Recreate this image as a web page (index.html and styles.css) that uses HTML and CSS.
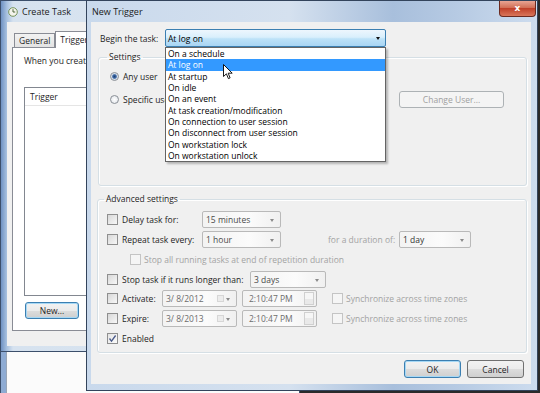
FILE: index.html
```html
<!DOCTYPE html>
<html>
	<head>
		<meta charset="utf-8"/>
		<title>New Trigger</title>
		<link rel="stylesheet" href="styles.css">
	</head>
	<body>
		<div class="desktop">
			<!-- window behind: Create Task -->
			<div class="win back">
				<div class="titlebar">
					<svg class="app-icon" width="10" height="10" viewBox="0 0 10 10">
						<circle cx="5" cy="5" r="4.3" fill="#f4f4ec" stroke="#6a8a4a" stroke-width="0.9"/>
						<path d="M5 2.2V5h2.2" fill="none" stroke="#3d5a2a" stroke-width="0.9"/>
					</svg>
					<span class="title">Create Task</span>
				</div>
				<div class="client">
					<div class="tabs">
						<div class="tab">General</div>
						<div class="tab active">Triggers</div>
						<div class="tab">Actions</div>
					</div>
					<div class="tab-panel">
						<p class="hint">When you create a task, you can specify the conditions that will trigger the task.</p>
						<div class="list">
							<div class="list-head">Trigger</div>
						</div>
						<div class="panel-buttons">
							<button class="btn default">New...</button>
						</div>
					</div>
				</div>
			</div>
			<div class="win under"><div class="under-client"></div></div>

			<!-- active window: New Trigger -->
			<div class="win front">
				<div class="titlebar">
					<span class="title">New Trigger</span>
					<span class="close">x</span>
				</div>
				<div class="client">
					<div class="begin-row">
						<label class="begin-label">Begin the task:</label>
						<div class="combo focus">At log on<span class="arrow dark"></span></div>
					</div>

					<fieldset class="group settings">
						<legend>Settings</legend>
						<div class="radio-row">
							<span class="radio checked"></span>Any user
						</div>
						<div class="radio-row">
							<span class="radio"></span>Specific user:
							<button class="btn disabled change-user">Change User...</button>
						</div>
					</fieldset>

					<fieldset class="group advanced">
						<legend>Advanced settings</legend>
						<div class="row">
							<span class="check"></span><span class="lbl w-delay">Delay task for:</span>
							<div class="combo ro w-small">15 minutes<span class="arrow"></span></div>
						</div>
						<div class="row">
							<span class="check"></span><span class="lbl w-delay">Repeat task every:</span>
							<div class="combo ro w-small">1 hour<span class="arrow"></span></div>
							<span class="lbl dim duration">for a duration of:</span>
							<div class="combo ro w-day">1 day<span class="arrow"></span></div>
						</div>
						<div class="row indent">
							<span class="check off"></span><span class="lbl dim">Stop all running tasks at end of repetition duration</span>
						</div>
						<div class="row">
							<span class="check"></span><span class="lbl w-stop">Stop task if it runs longer than:</span>
							<div class="combo ro w-stop-box">3 days<span class="arrow"></span></div>
						</div>
						<div class="row">
							<span class="check"></span><span class="lbl w-date">Activate:</span>
							<div class="field date">3/ 8/2012<span class="cal"></span><span class="arrow"></span></div>
							<div class="field time">2:10:47 PM<span class="spin"></span></div>
							<span class="check off sync"></span><span class="lbl dim">Synchronize across time zones</span>
						</div>
						<div class="row">
							<span class="check"></span><span class="lbl w-date">Expire:</span>
							<div class="field date">3/ 8/2013<span class="cal"></span><span class="arrow"></span></div>
							<div class="field time">2:10:47 PM<span class="spin"></span></div>
							<span class="check off sync"></span><span class="lbl dim">Synchronize across time zones</span>
						</div>
						<div class="row">
							<span class="check checked">
								<svg width="9" height="9" viewBox="0 0 9 9"><path d="M1.5 4.5l2 2.6L7.6 1.5" fill="none" stroke="#4a5a8a" stroke-width="1.3"/></svg>
							</span><span class="lbl">Enabled</span>
						</div>
					</fieldset>

					<div class="dialog-buttons">
						<button class="btn default">OK</button>
						<button class="btn">Cancel</button>
					</div>

					<ul class="dropdown">
						<li>On a schedule</li>
						<li class="selected">At log on</li>
						<li>At startup</li>
						<li>On idle</li>
						<li>On an event</li>
						<li>At task creation/modification</li>
						<li>On connection to user session</li>
						<li>On disconnect from user session</li>
						<li>On workstation lock</li>
						<li>On workstation unlock</li>
					</ul>

					<svg class="cursor" width="10" height="16" viewBox="0 0 10 16">
						<path d="M0.5 0.5V12.5L3.4 9.8L5.4 14.6L7.1 13.9L5.2 9.2H9.2Z" fill="#fff" stroke="#000" stroke-width="0.9" stroke-linejoin="round"/>
					</svg>
				</div>
			</div>
		</div>
	</body>
</html>
```

FILE: styles.css
```css
* {
	box-sizing: border-box;
}
body {
	margin: 0;
	background: #222;
	font-family: "Open Sans", "Noto Sans", sans-serif;
	font-size: 8.5px;
	color: #1e1e1e;
}
.desktop {
	position: relative;
	width: 540px;
	height: 393px;
	overflow: hidden;
	background: #2a2a2a;
}

/* windows */
.win {
	position: absolute;
	border: 1px solid #3c4f6b;
}
.titlebar {
	height: 21px;
	display: flex;
	align-items: center;
}
.title {
	font-size: 9px;
	color: #1a1a1a;
}
.client {
	background: #f0f0f0;
}

.back {
	left: 0;
	top: 0;
	width: 300px;
	height: 352px;
	padding: 0 0 5px 6px;
	background: linear-gradient(to right, #6f92c3, #a9c2e0 6px, #d6e2ef 12px, #d9e4f0);
}
.back .titlebar {
	padding-left: 1px;
}
.back .app-icon {
	margin-right: 4px;
}
.back .client {
	height: 324px;
	padding: 9px 0 0 5px;
}
.tabs {
	display: flex;
	align-items: flex-end;
	height: 16px;
	padding-left: 2px;
}
.tab {
	height: 14px;
	padding: 0 4px;
	line-height: 13px;
	border: 1px solid #898c95;
	border-bottom: 0;
	background: linear-gradient(#f2f2f2, #e3e3e3);
}
.tab.active {
	height: 17px;
	margin-bottom: -1px;
	padding-top: 1px;
	background: #fff;
	position: relative;
}
.tab-panel {
	height: 284px;
	background: #fff;
	border: 1px solid #898c95;
	padding: 7px 0 0 11px;
}
.hint {
	margin: 0;
	line-height: 12px;
	white-space: nowrap;
}
.list {
	margin-top: 20px;
	height: 209px;
	border: 1px solid #828790;
}
.list-head {
	height: 18px;
	line-height: 17px;
	padding-left: 5px;
	border-bottom: 1px solid #e5e5e5;
}
.panel-buttons {
	padding: 6px 0 0 1px;
}

.under {
	left: 0;
	top: 351px;
	width: 300px;
	height: 60px;
	padding-left: 5px;
	background: #8eabd3;
}
.under-client {
	height: 100%;
	border-left: 1px solid #9aa6b6;
	background: #fbfbfb;
}

.front {
	left: 86px;
	top: 0;
	width: 452px;
	height: 391px;
	padding: 0 6px 6px 4px;
	background: linear-gradient(to right, #c9d9ec, #d5e1ef 45%, #a8bfdc 68%, #b6cae3 82%, #cddcee);
	border-color: #33445c;
}
.front .titlebar {
	padding-left: 1px;
}
.close {
	margin-left: auto;
	margin-right: -5px;
	align-self: flex-start;
	width: 37px;
	height: 16px;
	border: 1px solid #6b2a20;
	border-top: 0;
	border-radius: 0 0 4px 4px;
	background: linear-gradient(#e8a493, #d16f56 45%, #c0412a 50%, #d9765a);
	color: #fff;
	font-family: "DejaVu Sans", sans-serif;
	font-weight: bold;
	font-size: 9px;
	line-height: 14px;
	text-align: center;
}
.front .client {
	position: relative;
	height: 362px;
	padding: 7px 4px 0 6px;
}

/* begin row */
.begin-row {
	display: flex;
	align-items: center;
	height: 18px;
}
.begin-label {
	width: 68px;
	padding-left: 3px;
}

/* combos and fields */
.combo, .field {
	position: relative;
	display: flex;
	align-items: center;
	height: 17px;
	padding-left: 3px;
	border: 1px solid #b9b9b9;
	border-radius: 2px;
	background: linear-gradient(to right, #f3f3f3, #fbfbfb 60%, #f0f0f0);
	color: #4a4a4a;
	white-space: nowrap;
}
.combo.focus {
	width: 221px;
	height: 18px;
	padding-left: 2px;
	border-color: #3c7fb1;
	background: linear-gradient(#edf6fd, #d9effc 45%, #bde2f8 55%, #a9d5f3);
	color: #000;
}
.arrow {
	position: absolute;
	right: 6px;
	top: 7px;
	border-left: 2.5px solid transparent;
	border-right: 2.5px solid transparent;
	border-top: 3px solid #8a8a8a;
}
.arrow.dark {
	border-top-color: #111;
	right: 5px;
}
.w-small {
	width: 79px;
}
.w-day {
	width: 72px;
	color: #333;
}
.w-stop-box {
	width: 76px;
}

/* group boxes */
.group {
	margin: 0;
	border: 1px solid #d5dfe5;
	border-radius: 3px;
	box-shadow: inset 1px 1px 0 #fff, 1px 1px 0 #fff;
}
.group legend {
	padding: 0 2px;
	margin-left: -3px;
	line-height: 12px;
}
.settings {
	margin-top: 4px;
	margin-left: 1px;
	width: 429px;
	height: 135px;
	padding: 5px 22px 0 11px;
}
.radio-row {
	display: flex;
	align-items: center;
	height: 16px;
}
.radio-row + .radio-row {
	margin-top: 5px;
	height: 20px;
}
.radio {
	width: 9px;
	height: 9px;
	margin-right: 4px;
	border: 1px solid #8a8f96;
	border-radius: 50%;
	background: radial-gradient(#fff, #dfe3e8);
}
.radio.checked {
	background: radial-gradient(circle, #1f3f72 0, #3d6aa8 1.8px, #cfd9e6 2.8px, #f4f6f9 4px);
}
.change-user {
	margin-left: auto;
	width: 105px;
	height: 19px;
}

.advanced {
	margin-top: 7px;
	width: 430px;
	height: 160px;
	padding: 5px 0 0 9px;
	display: grid;
	grid-auto-rows: 19.75px;
}
.row {
	display: flex;
	align-items: center;
	white-space: nowrap;
}
.row.indent {
	padding-left: 23px;
}
.check {
	flex: none;
	display: flex;
	align-items: center;
	justify-content: center;
	width: 11px;
	height: 11px;
	margin-right: 4px;
	border: 1px solid #8f8f8f;
	background: linear-gradient(135deg, #d8d8d8, #f7f7f7);
}
.check.off {
	border-color: #c4c4c4;
	background: #f5f5f5;
	margin-right: 3px;
}
.check.checked {
	background: linear-gradient(135deg, #e4e4e4, #fbfbfb);
}
.lbl {
	flex: none;
}
.dim {
	color: #a3a3a3;
}
.w-delay {
	width: 80px;
}
.w-stop {
	width: 128px;
}
.w-date {
	width: 40px;
}
.duration {
	margin-left: 47px;
	width: 71px;
}
.field {
	width: 75px;
	color: #6d6d6d;
}
.field.time {
	margin-left: 5px;
	padding-left: 6px;
}
.cal {
	position: absolute;
	right: 12px;
	top: 4px;
	width: 7px;
	height: 7px;
	border: 1px solid #d6d6d6;
	background: #ececec;
}
.spin {
	position: absolute;
	right: 2px;
	top: 1px;
	width: 10px;
	height: 13px;
	border: 1px solid #d0d0d0;
	background: linear-gradient(#f6f6f6 50%, #e9e9e9 50%);
}
.check.sync {
	margin-left: 15px;
}

/* buttons */
.btn {
	font-family: inherit;
	font-size: 8.5px;
	height: 17px;
	padding: 0;
	border: 1px solid #707070;
	border-radius: 3px;
	background: linear-gradient(#f2f2f2, #ebebeb 50%, #dddddd 50%, #cfcfcf);
	color: #1e1e1e;
}
.btn.default {
	border-color: #3c7fb1;
	box-shadow: inset 0 0 0 1px #a6d8f5;
}
.btn.disabled {
	border-color: #adb2b5;
	background: #f4f4f4;
	color: #a0a0a0;
}
.panel-buttons .btn {
	width: 54px;
}
.dialog-buttons {
	display: flex;
	justify-content: flex-end;
	gap: 6px;
	margin-top: 7px;
	padding-right: 3px;
}
.dialog-buttons .btn {
	width: 57px;
	height: 18px;
}

/* open list of the begin combo */
.dropdown {
	position: absolute;
	left: 74px;
	top: 25px;
	width: 221px;
	margin: 0;
	padding: 0;
	list-style: none;
	background: #fff;
	border: 1px solid #646464;
	box-shadow: 2px 2px 2px rgba(0, 0, 0, 0.25);
}
.dropdown li {
	height: 11.35px;
	line-height: 11.35px;
	padding-left: 2px;
	color: #000;
	white-space: nowrap;
}
.dropdown li.selected {
	background: #3399ff;
	color: #fff;
}
.cursor {
	position: absolute;
	left: 132px;
	top: 42px;
}
```
